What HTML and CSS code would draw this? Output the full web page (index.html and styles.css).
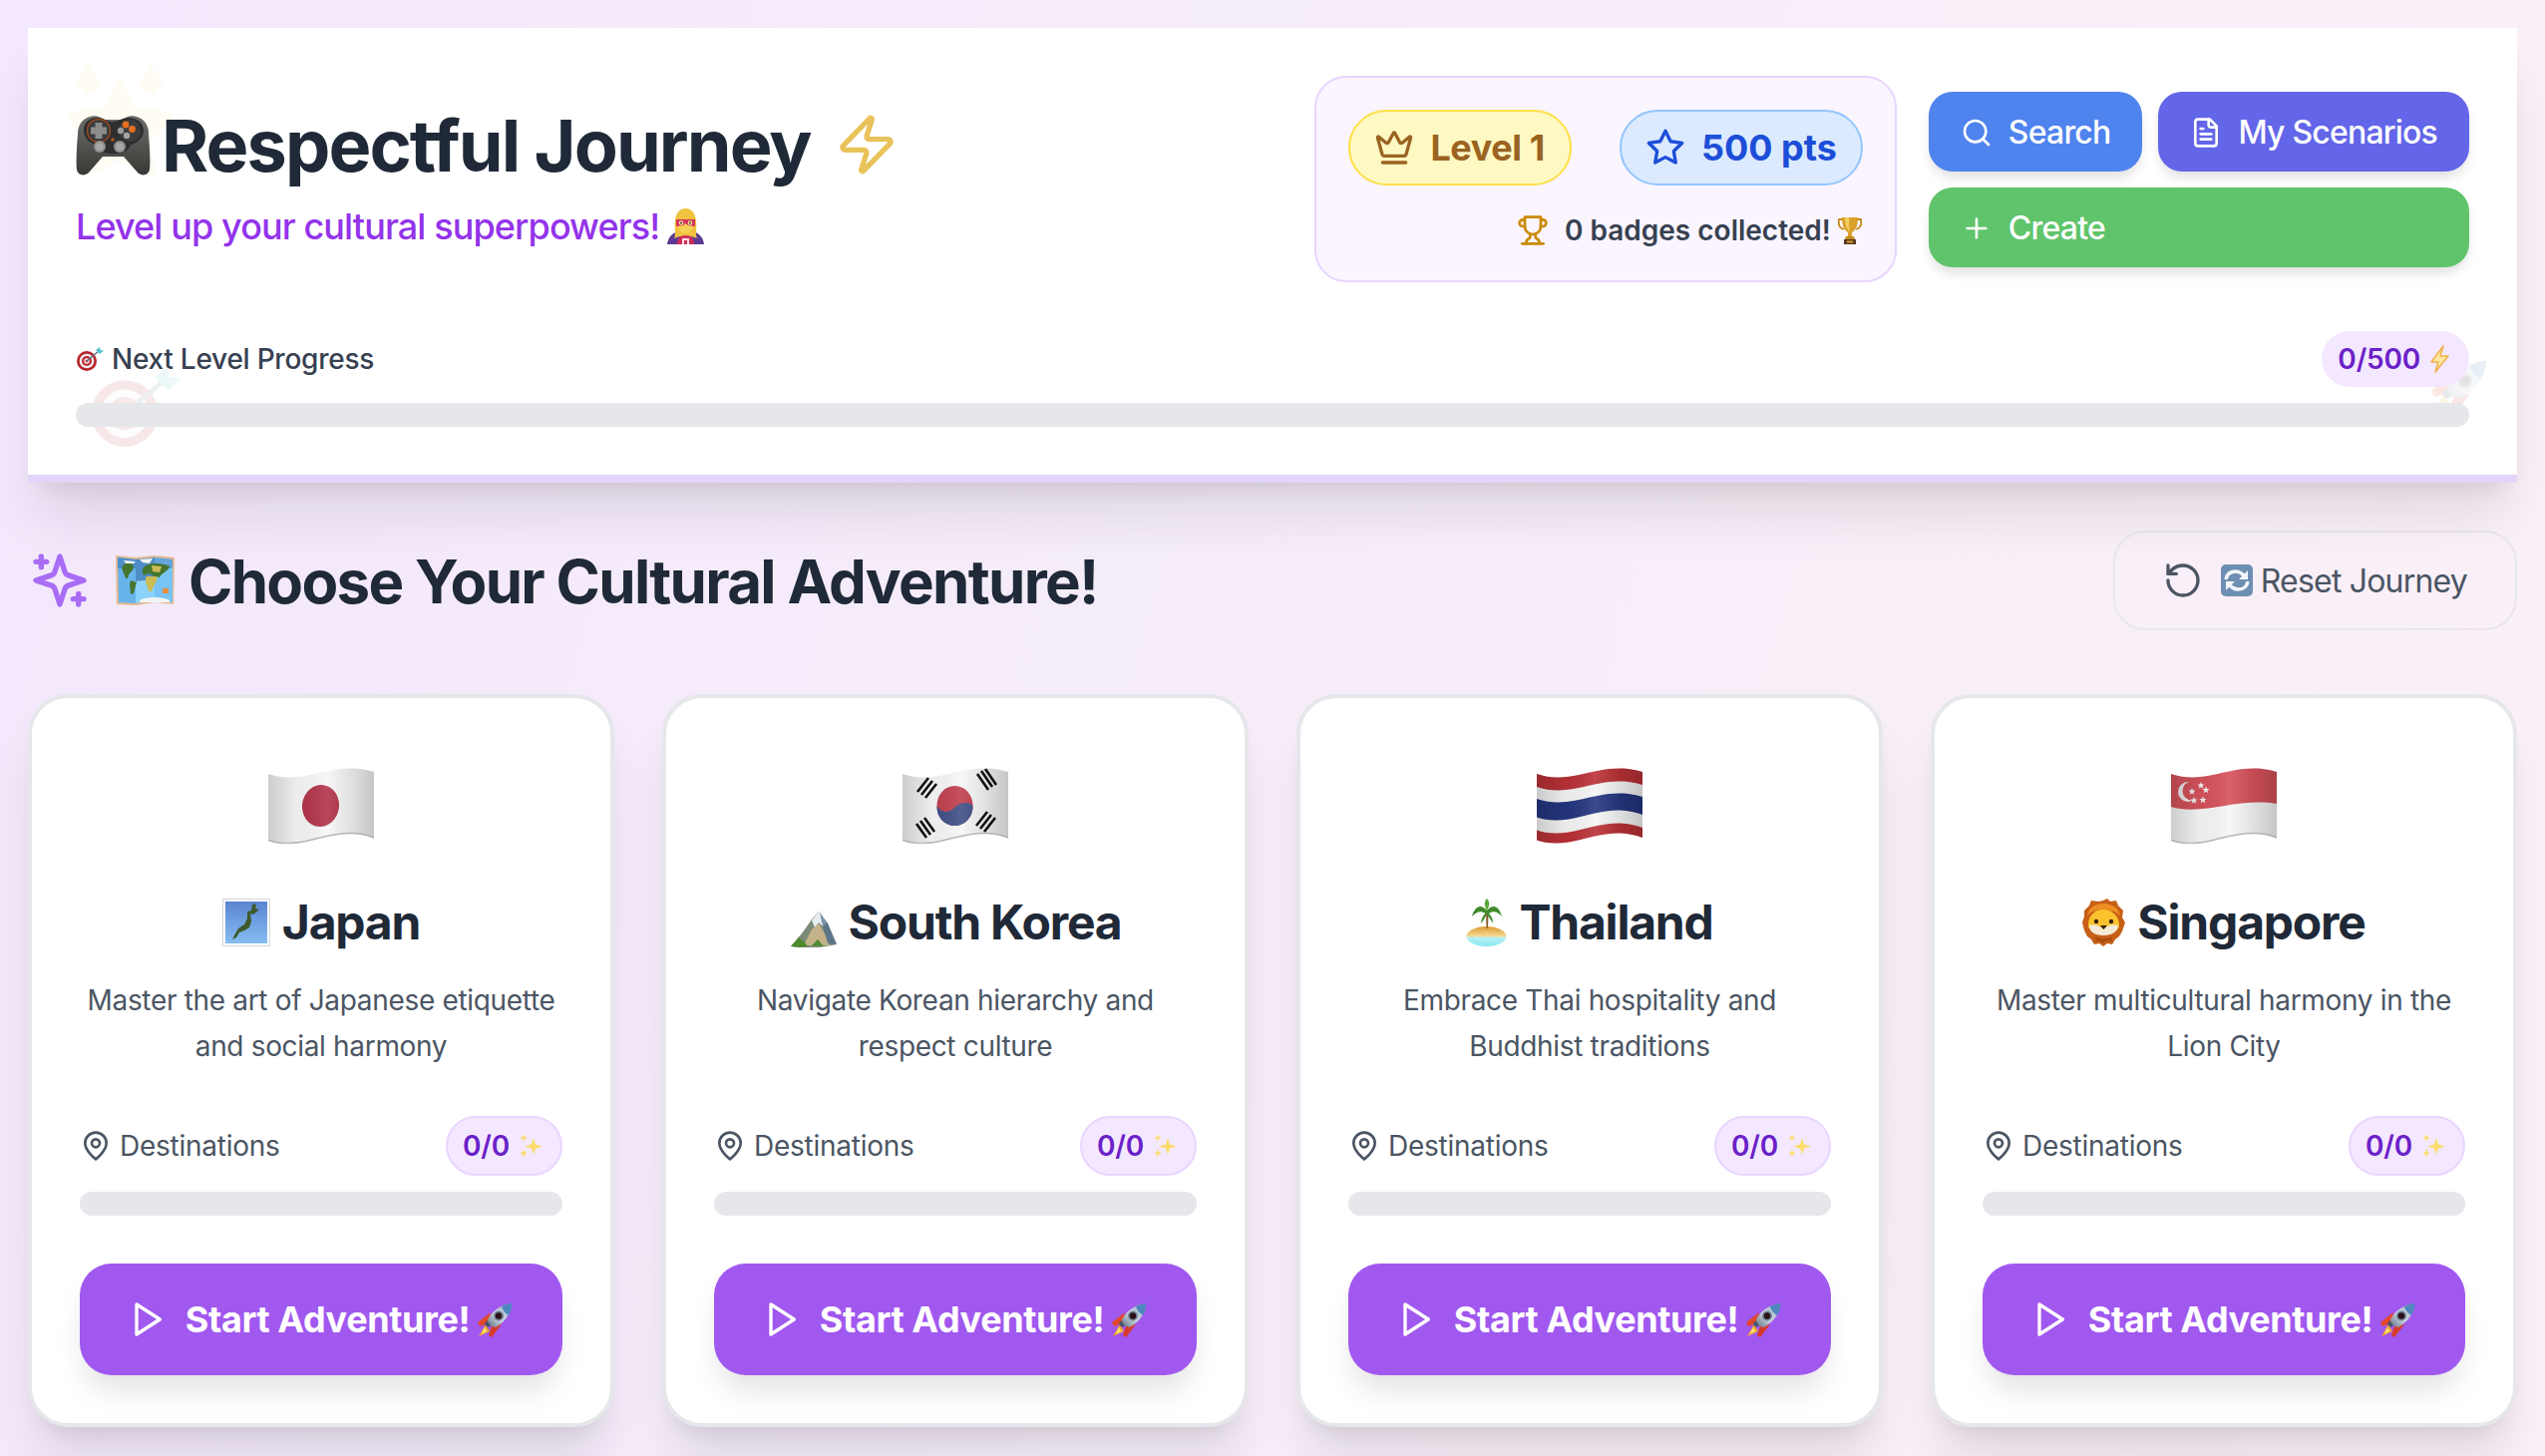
FILE: index.html
```html
<!DOCTYPE html>
<html lang="en">
<head>
<meta charset="utf-8">
<title>Respectful Journey</title>
<link rel="stylesheet" href="styles.css">
</head>
<body>
<svg class="sprite" aria-hidden="true">
  <defs>
    <linearGradient id="flagShade" x1="0" x2="1" y1="0" y2="0">
      <stop offset="0" stop-color="#000" stop-opacity=".17"/>
      <stop offset=".28" stop-color="#000" stop-opacity=".04"/>
      <stop offset=".55" stop-color="#fff" stop-opacity=".1"/>
      <stop offset=".8" stop-color="#000" stop-opacity=".1"/>
      <stop offset="1" stop-color="#000" stop-opacity=".2"/>
    </linearGradient>
    <linearGradient id="padBody" x1="0" x2="0" y1="0" y2="1">
      <stop offset="0" stop-color="#6d6e6a"/><stop offset="1" stop-color="#383936"/>
    </linearGradient>
    <linearGradient id="japSea" x1="0" x2="0" y1="0" y2="1">
      <stop offset="0" stop-color="#5a84d0"/><stop offset="1" stop-color="#86bdf3"/>
    </linearGradient>
    <linearGradient id="rocketBody" x1="0" x2="1" y1="1" y2="0">
      <stop offset="0" stop-color="#5f6f82"/><stop offset=".45" stop-color="#cfd8e2"/><stop offset="1" stop-color="#8ea5bc"/>
    </linearGradient>
    <linearGradient id="sandBall" x1="0" x2="0" y1="0" y2="1">
      <stop offset="0" stop-color="#dc9a2e"/><stop offset=".5" stop-color="#f5dc98"/><stop offset=".56" stop-color="#b5f0f4"/><stop offset="1" stop-color="#8ae6f2"/>
    </linearGradient>
    <clipPath id="flagClip"><path d="M0 6C14 11 28 10 42 7C58 3.5 74-1 92 1Q100 2 106 4V70Q96 66 84 65.5C66 65 50 71 32 74.5C20 76.5 8 75.5 0 72.5Z"/></clipPath>

    <symbol id="i-crown" viewBox="0 0 24 24"><path d="M11.562 3.266a.5.5 0 0 1 .876 0L15.39 8.87a1 1 0 0 0 1.516.294L21.183 5.5a.5.5 0 0 1 .798.519l-2.834 10.246a1 1 0 0 1-.956.734H5.81a1 1 0 0 1-.957-.734L2.02 6.02a.5.5 0 0 1 .798-.519l4.276 3.664a1 1 0 0 0 1.516-.294z"/><path d="M5 21h14"/></symbol>
    <symbol id="i-star" viewBox="0 0 24 24"><polygon points="12 2 15.09 8.26 22 9.27 17 14.14 18.18 21.02 12 17.77 5.82 21.02 7 14.14 2 9.27 8.91 8.26 12 2"/></symbol>
    <symbol id="i-search" viewBox="0 0 24 24"><circle cx="11" cy="11" r="8"/><path d="m21 21-4.3-4.3"/></symbol>
    <symbol id="i-file" viewBox="0 0 24 24"><path d="M15 2H6a2 2 0 0 0-2 2v16a2 2 0 0 0 2 2h12a2 2 0 0 0 2-2V7Z"/><path d="M14 2v4a2 2 0 0 0 2 2h4"/><path d="M10 9H8"/><path d="M16 13H8"/><path d="M16 17H8"/></symbol>
    <symbol id="i-plus" viewBox="0 0 24 24"><path d="M5 12h14"/><path d="M12 5v14"/></symbol>
    <symbol id="i-trophy" viewBox="0 0 24 24"><path d="M6 9H4.5a2.5 2.5 0 0 1 0-5H6"/><path d="M18 9h1.5a2.5 2.5 0 0 0 0-5H18"/><path d="M4 22h16"/><path d="M10 14.66V17c0 .55-.47.98-.97 1.21C7.85 18.75 7 20.24 7 22"/><path d="M14 14.66V17c0 .55.47.98.97 1.21C16.15 18.75 17 20.24 17 22"/><path d="M18 2H6v7a6 6 0 0 0 12 0V2Z"/></symbol>
    <symbol id="i-zap" viewBox="0 0 24 24"><path d="M4 14a1 1 0 0 1-.78-1.63l9.9-10.2a.5.5 0 0 1 .86.46l-1.92 6.02A1 1 0 0 0 13 10h7a1 1 0 0 1 .78 1.63l-9.9 10.2a.5.5 0 0 1-.86-.46l1.92-6.02A1 1 0 0 0 11 14z"/></symbol>
    <symbol id="i-sparkles" viewBox="0 0 24 24"><path d="m12 3-1.912 5.813a2 2 0 0 1-1.275 1.275L3 12l5.813 1.912a2 2 0 0 1 1.275 1.275L12 21l1.912-5.813a2 2 0 0 1 1.275-1.275L21 12l-5.813-1.912a2 2 0 0 1-1.275-1.275L12 3Z"/><path d="M5 3v4"/><path d="M19 17v4"/><path d="M3 5h4"/><path d="M17 19h4"/></symbol>
    <symbol id="i-reset" viewBox="0 0 24 24"><path d="M3 12a9 9 0 1 0 9-9 9.75 9.75 0 0 0-6.74 2.74L3 8"/><path d="M3 3v5h5"/></symbol>
    <symbol id="i-pin" viewBox="0 0 24 24"><path d="M20 10c0 6-8 12-8 12s-8-6-8-12a8 8 0 0 1 16 0Z"/><circle cx="12" cy="10" r="3"/></symbol>
    <symbol id="i-play" viewBox="0 0 24 24"><polygon points="6 3 20 12 6 21 6 3"/></symbol>

    <symbol id="e-pad" viewBox="0 0 75 60">
      <path fill="url(#padBody)" d="M14 1C20-1 26 2 28 4H47C49 2 55-1 61 1C69 3 73 10 73 18C74 32 75 46 74 54C73 60 66 61 62 57L48 41H27L13 57C9 61 2 60 1 54C0 46 1 32 2 18C2 10 6 3 14 1Z"/>
      <path fill="#2d2e30" d="M8 14C8 6 15 2 22 2C28 2 31 6 37 6C43 6 46 2 53 2C61 2 68 7 68 15C68 22 61 28 55 29C53 36 46 38 37 38C28 38 22 36 20 29C13 27 8 22 8 14Z"/>
      <circle cx="23" cy="15" r="11.5" fill="#3a3b3d" stroke="#9c4a1e" stroke-width="1.4"/>
      <path fill="#8b8d8d" d="M19.5 7H26.5V11.5H31V18.5H26.5V23H19.5V18.5H15V11.5H19.5Z"/>
      <circle cx="54" cy="15" r="11" fill="#3b3c3e"/>
      <circle cx="50" cy="9" r="3.4" fill="#e66f22"/><circle cx="56.5" cy="13.5" r="3.4" fill="#e66f22"/>
      <circle cx="45" cy="15" r="3.2" fill="#9a9b9b"/><circle cx="51" cy="20" r="3.2" fill="#a3a4a4"/>
      <circle cx="37" cy="24" r="1.8" fill="#b5551c"/>
      <circle cx="24" cy="31" r="6" fill="#8f9090"/><circle cx="24" cy="31" r="3.8" fill="#a7a8a8"/>
      <circle cx="44" cy="31" r="6" fill="#8f9090"/><circle cx="44" cy="31" r="3.8" fill="#a7a8a8"/>
    </symbol>

    <symbol id="e-hero" viewBox="0 0 37 36">
      <path fill="#5a3a92" d="M0 36C1 28 6 24 12 23H25C31 24 36 28 37 36Z"/>
      <path fill="#f0c23e" d="M7 30C9 26 7 20 8 12C9 4 13 0 18.500 0C24 0 28 4 29 12C30 20 28 26 30 30L24 28H13Z"/>
      <path fill="#f6cf55" d="M11 13C13 12 24 11 26 13C27 20 23 25 18.500 25C14 25 10 20 11 13Z"/>
      <path fill="#d6335f" d="M9 11H28V18L21 17L18.500 15L16 17L9 18Z"/>
      <circle cx="14" cy="14.500" r="2.200" fill="#f6e3a3"/><circle cx="23" cy="14.500" r="2.200" fill="#f6e3a3"/>
      <circle cx="14" cy="14.500" r="1" fill="#3a2a10"/><circle cx="23" cy="14.500" r="1" fill="#3a2a10"/>
      <path fill="#cf2c57" d="M10 36C10 30 13 27 18.500 27C24 27 27 30 27 36Z"/>
      <path fill="#f9dfe6" d="M15 30H22V36H15ZM17 32V36H20V32Z" fill-rule="evenodd"/>
    </symbol>

    <symbol id="e-dart" viewBox="0 0 28 24">
      <circle cx="11" cy="14" r="10" fill="#b6242b"/><circle cx="11" cy="14" r="7.300" fill="#f0f0f0"/>
      <circle cx="11" cy="14" r="5" fill="#c22a30"/><circle cx="11" cy="14" r="2.700" fill="#f0f0f0"/><circle cx="11" cy="14" r="1.300" fill="#b6242b"/>
      <path d="M11 14L23 4" stroke="#5d7280" stroke-width="1.400"/>
      <path fill="#58c1d2" d="M20 3L24 0L24.500 3L28 3.500L24 7Z"/>
    </symbol>

    <symbol id="e-star" viewBox="0 0 112 114">
      <path fill="#fcd34d" d="M56 16C59 16 61 20 63 28L70 43L98 47C110 49 112 53 105 60L85 78L91 104C93 113 88 114 81 110L56 96L31 110C24 114 19 113 21 104L27 78L7 60C0 53 2 49 14 47L42 43L49 28C51 20 53 16 56 16Z"/>
      <path fill="#fcd34d" d="M12 18L25 0L38 22L24 32ZM100 18L87 0L74 22L88 32Z"/>
    </symbol>

    <symbol id="e-map" viewBox="0 0 59 52">
      <path fill="#e3b98f" d="M0 1L20 3L39 1L59 3L58 50L39 48L20 51L1 50Z"/>
      <path fill="#67b3ec" d="M2 3L20 5V49L3 48Z"/><path fill="#4e8dc6" d="M20 5L39 3V25L20 27Z"/>
      <path fill="#79c4f6" d="M39 3L57 5V48L39 46Z"/><path fill="#8bd3fb" d="M20 27L39 25V46L20 49Z"/>
      <path fill="#4d90c9" d="M2 3L20 5V14L2 14Z"/><path fill="#62a5da" d="M39 3L57 5V14L39 14Z"/>
      <path fill="#46762e" d="M7 11C12 6 19 9 18 14C16 18 13 18 12 24L10 24C9 19 5 16 7 11ZM15 26L21 28L18 39L15 40C15 34 13 31 15 26ZM29 12C34 7 50 9 54 12C53 17 46 18 44 23L39 22L33 19L28 21C26 17 27 14 29 12Z"/>
      <path fill="#cdbb55" d="M31 22L41 22C43 26 38 30 36 37H33C32 31 28 27 31 22ZM36 11L46 12L44 18L37 17Z"/>
      <path fill="#e68f3d" d="M47 34H53V39H47Z"/>
      <path fill="#f2f5f5" d="M8 6L20 7L18 9L10 9ZM24 5L37 4L34 9L27 8ZM24 46C30 42 48 42 54 46L54 48H24Z"/>
    </symbol>

    <symbol id="e-japan" viewBox="0 0 48 48">
      <rect x=".5" y=".5" width="47" height="47" fill="#fff" stroke="#d3d7dc"/>
      <rect x="3" y="3" width="42" height="42" fill="url(#japSea)"/>
      <path fill="#3e5a2b" d="M30 6L34 5L33 10L37 11L31 16L28 15L29 23L27 29L22 32L17 34L14 39L10 41L13 35L16 30L22 26L25 20L25 13L29 12Z"/>
    </symbol>

    <symbol id="e-mount" viewBox="0 0 47 36">
      <path fill="#7c8b78" d="M1 35L12 22L22 8L29 0L38 12L47 33L30 36L10 36Z"/>
      <path fill="#c4b28a" d="M14 34L22 18L29 12L36 24L40 34Z"/>
      <path fill="#e9edf2" d="M22 9L29 0L37 11L33 15L29 11L25 16Z"/>
      <path fill="#4f6d8c" d="M30 1L38 12L47 33L38 32L33 15Z" opacity=".7"/>
      <path fill="#4e8a2e" d="M1 35L9 26L14 30L18 35L10 36ZM22 34L28 28L34 35Z"/>
    </symbol>

    <symbol id="e-island" viewBox="0 0 41 48">
      <ellipse cx="20.500" cy="38" rx="20" ry="10" fill="url(#sandBall)"/>
      <path fill="#8a5a2b" d="M20 14H22.500L22 30H20.500Z"/>
      <path fill="#3f8a2a" d="M21 12C15 5 9 7 6 18C11 13 15 12 19.500 15C17 17 15 21 15 25C18 21 20 18 21 15C22 18 25 21 27 25C27 20 25 17 23 15C27 12 32 13 36 18C33 7 27 5 21 12Z"/>
      <path fill="#5aa93a" d="M21 12C18 7 18 3 21 0C24 3 24 7 21 12Z"/>
    </symbol>

    <symbol id="e-lion" viewBox="0 0 43 48">
      <path fill="#c65f17" d="M21 2L25 0L28 3L34 2L36 7L41 12L40 19L43 24L40 33L37 38L33 41L30 46L25 45L21 48L17 45L12 46L9 41L5 38L2 32L0 24L2 18L2 12L7 7L9 2L16 3Z"/>
      <path fill="#ed8e22" d="M21 5C30 5 37 10 38 18C34 13 29 11 21 11C13 11 8 13 5 18C6 10 12 5 21 5Z"/>
      <path fill="#fbc32d" d="M21 11C31 11 37 19 37 26C37 33 30 35 21 35C12 35 6 33 6 26C6 19 11 11 21 11Z"/>
      <path fill="#f4ead7" d="M7 27C12 25 17 27 21 31C25 27 30 25 36 27C36 33 30 37 21 37C12 37 7 33 7 27Z"/>
      <circle cx="14" cy="23" r="2.200" fill="#33200f"/><circle cx="29" cy="23" r="2.200" fill="#33200f"/>
      <path fill="#33200f" d="M18 27H25L21.500 31Z"/>
      <path fill="#a84e12" d="M13 38C17 41 26 41 30 38L29 43L25 42L21 45L17 42L14 43Z"/>
    </symbol>

    <symbol id="e-rocket" viewBox="0 0 35 35">
      <path fill="#f0a02c" d="M8 22L1 34L12 29Z"/>
      <path fill="#fbe26a" d="M7 25L3.500 32L9.500 29Z"/>
      <path fill="#e2472c" d="M13 10L0 20L2 24L11 21Z"/>
      <path fill="#d83a2a" d="M24 22L14 35L11 33L14 24Z"/>
      <path fill="url(#rocketBody)" d="M34 1C35 9 28 19 18 25L11 23L10 17C15 8 24 2 34 1Z"/>
      <path fill="#4f86c0" d="M34 1C35 5 33 9 31 13C28 11 25 8 24 4C27 2.500 30 1.500 34 1Z"/>
      <circle cx="21" cy="13.500" r="5" fill="#6f8294"/><circle cx="21" cy="13.500" r="3.200" fill="#2b1119"/>
      <path fill="#46566a" d="M9 18L13 23L10 25L7 22Z"/>
    </symbol>

    <symbol id="e-trophy" viewBox="0 0 26 28">
      <path fill="none" stroke="#c48a1c" stroke-width="1.800" d="M6 3H2C1 9 3 12 7 13M20 3H24C25 9 23 12 19 13"/>
      <path fill="#d9a02a" d="M5 1H21C21 9 19 14 15 16V20H11V16C7 14 5 9 5 1Z"/>
      <path fill="#f3cf63" d="M8 1H12C12 7 12 12 13 16C10 13 8 8 8 1Z"/>
      <path fill="#c48a1c" d="M9 20H17L18 23H8Z"/>
      <path fill="#5b3a1f" d="M7 23H19V28H7Z"/>
      <path fill="#d9a02a" d="M10 24.500H16V26.500H10Z"/>
    </symbol>

    <symbol id="e-sync" viewBox="0 0 32 32">
      <rect width="32" height="32" rx="5" fill="#6c8eb2"/>
      <path d="M5 15C6 9 10 7 15 7C19 7 21 9 23 11" fill="none" stroke="#f2f6fa" stroke-width="3.500"/>
      <path fill="#f2f6fa" d="M27 6V15H18Z"/>
      <path d="M27 17C26 23 22 25 17 25C13 25 11 23 9 21" fill="none" stroke="#f2f6fa" stroke-width="3.500"/>
      <path fill="#f2f6fa" d="M5 26V17H14Z"/>
    </symbol>

    <symbol id="e-bolt" viewBox="0 0 19 28">
      <path fill="#fde9a0" stroke="#efb04a" stroke-width="1.500" stroke-linejoin="round" d="M13 1L1 17H8L5 27L18 11H10Z"/>
    </symbol>

    <symbol id="e-shine" viewBox="0 0 26 24">
      <path fill="#fcdc6a" d="M16 4L18 10.500L25 12.500L18 14.500L16 21L14 14.500L7 12.500L14 10.500ZM6 0L7 3L10 4L7 5L6 8L5 5L2 4L5 3ZM6 15L7 18L9.500 19.500L7 20.500L6 24L5 20.500L2.500 19.500L5 18Z"/>
    </symbol>

    <symbol id="f-japan" viewBox="0 0 106 76">
      <g clip-path="url(#flagClip)"><rect width="106" height="76" fill="#f7f7f7"/><ellipse cx="52.500" cy="38" rx="18.500" ry="21" fill="#b23349" transform="rotate(8 52.500 38)"/><rect width="106" height="76" fill="url(#flagShade)"/></g>
      <path d="M0 72.500C8 75.500 20 76.500 32 74.500C50 71 66 65 84 65.500Q96 66 106 70" fill="none" stroke="#9b9b9b" stroke-width="1.500" opacity=".7"/>
    </symbol>
    <symbol id="f-korea" viewBox="0 0 106 76">
      <g clip-path="url(#flagClip)"><rect width="106" height="76" fill="#f7f7f7"/>
        <ellipse cx="52.500" cy="38" rx="18" ry="20" fill="#c13f4f"/>
        <path fill="#3f4f87" d="M34.500 38C38 45 46 46 52 40C57 35 66 33 70.500 38C71 50 62 58 52.500 58C42 58 34 50 34.500 38Z"/>
        <g stroke="#111" stroke-width="2.600"><path d="M15 24L26 10M19 27L30 13M23 30L34 16"/><path d="M75 6L86 22M79 3L90 19M83 1L94 17"/><path d="M14 56L24 70M18 53L28 67M22 50L32 64"/><path d="M74 58L85 44M78 61L89 47M82 64L93 50"/></g>
        <rect width="106" height="76" fill="url(#flagShade)"/></g>
      <path d="M0 72.500C8 75.500 20 76.500 32 74.500C50 71 66 65 84 65.500Q96 66 106 70" fill="none" stroke="#9b9b9b" stroke-width="1.500" opacity=".7"/>
    </symbol>
    <symbol id="f-thai" viewBox="0 0 106 76">
      <g clip-path="url(#flagClip)"><rect width="106" height="76" fill="#b93136"/>
        <path d="M0 19C14 24 28 23 42 20C58 16.500 74 12 92 14Q100 15 106 17V60Q96 56 84 55.500C66 55 50 61 32 64.500C20 66.500 8 65.500 0 62.500Z" fill="#f5f5f5"/>
        <path d="M0 31C14 36 28 35 42 32C58 28.500 74 24 92 26Q100 27 106 29V47Q96 43 84 42.500C66 42 50 48 32 51.500C20 53.500 8 52.500 0 49.500Z" fill="#24367f"/>
        <rect width="106" height="76" fill="url(#flagShade)"/></g>
    </symbol>
    <symbol id="f-sing" viewBox="0 0 106 76">
      <g clip-path="url(#flagClip)"><rect width="106" height="76" fill="#f7f7f7"/>
        <path d="M0 0H106V36C90 33 70 35 54 38C36 41 16 44 0 39Z" fill="#d6525b"/>
        <circle cx="17" cy="24" r="10" fill="#efefef"/><circle cx="21" cy="23" r="9.500" fill="#d6525b"/>
        <path fill="#f4f4f4" d="M30 14l1 2.500 2.500 0-2 1.700.8 2.500-2.300-1.500-2.300 1.500.8-2.500-2-1.700 2.500 0zM21 20l1 2.500 2.500 0-2 1.700.8 2.500-2.300-1.500-2.300 1.500.8-2.500-2-1.700 2.500 0zM35 18.500l1 2.500 2.500 0-2 1.700.8 2.500-2.300-1.500-2.300 1.500.8-2.500-2-1.700 2.500 0zM23 29l1 2.500 2.500 0-2 1.700.8 2.500-2.300-1.500-2.300 1.500.8-2.500-2-1.700 2.500 0zM32 28.500l1 2.500 2.500 0-2 1.700.8 2.500-2.300-1.500-2.300 1.500.8-2.500-2-1.700 2.500 0z"/>
        <rect width="106" height="76" fill="url(#flagShade)"/></g>
      <path d="M0 72.500C8 75.500 20 76.500 32 74.500C50 71 66 65 84 65.500Q96 66 106 70" fill="none" stroke="#9b9b9b" stroke-width="1.500" opacity=".7"/>
    </symbol>
  </defs>
</svg>

<header class="top-card">
  <svg class="float float-star"><use href="#e-star"/></svg>
  <svg class="float float-dart"><use href="#e-dart"/></svg>
  <svg class="float float-rocket"><use href="#e-rocket"/></svg>
  <div class="top-row">
    <div class="brand">
      <h1 class="title"><svg class="emoji-pad"><use href="#e-pad"/></svg><span>Respectful Journey</span><svg class="zap line"><use href="#i-zap"/></svg></h1>
      <p class="tagline"><span>Level up your cultural superpowers!</span><svg class="emoji-hero"><use href="#e-hero"/></svg></p>
    </div>
    <div class="top-right">
      <div class="stats">
        <div class="pills">
          <div class="pill pill-level"><svg class="line ic-40"><use href="#i-crown"/></svg><span>Level 1</span></div>
          <div class="pill pill-points"><svg class="line ic-40"><use href="#i-star"/></svg><span>500 pts</span></div>
        </div>
        <div class="badges"><svg class="line ic-32 trophy-line"><use href="#i-trophy"/></svg><span>0 badges collected!</span><svg class="emoji-trophy"><use href="#e-trophy"/></svg></div>
      </div>
      <div class="actions">
        <button class="btn btn-blue"><svg class="line ic-32"><use href="#i-search"/></svg>Search</button>
        <button class="btn btn-indigo"><svg class="line ic-32"><use href="#i-file"/></svg>My Scenarios</button>
        <button class="btn btn-green"><svg class="line ic-32"><use href="#i-plus"/></svg>Create</button>
      </div>
    </div>
  </div>
  <div class="progress">
    <div class="progress-head">
      <div class="progress-label"><svg class="emoji-dart"><use href="#e-dart"/></svg><span>Next Level Progress</span></div>
      <div class="progress-count"><span>0/500</span><svg class="emoji-bolt"><use href="#e-bolt"/></svg></div>
    </div>
    <div class="bar"></div>
  </div>
</header>

<section class="section-head">
  <h2 class="section-title"><svg class="line sparkles"><use href="#i-sparkles"/></svg><svg class="emoji-map"><use href="#e-map"/></svg><span>Choose Your Cultural Adventure!</span></h2>
  <button class="reset"><svg class="line ic-40"><use href="#i-reset"/></svg><svg class="emoji-sync"><use href="#e-sync"/></svg><span>Reset Journey</span></button>
</section>

<main class="cards">
  <article class="card">
    <svg class="flag"><use href="#f-japan"/></svg>
    <h3 class="name"><svg class="emoji-name japan"><use href="#e-japan"/></svg><span>Japan</span></h3>
    <p class="desc">Master the art of Japanese etiquette and social harmony</p>
    <div class="dest"><div class="dest-label"><svg class="line ic-32"><use href="#i-pin"/></svg><span>Destinations</span></div><div class="count"><span>0/0</span><svg class="emoji-shine"><use href="#e-shine"/></svg></div></div>
    <div class="bar"></div>
    <button class="start"><svg class="line ic-40"><use href="#i-play"/></svg><span>Start Adventure!</span><svg class="emoji-rocket"><use href="#e-rocket"/></svg></button>
  </article>
  <article class="card">
    <svg class="flag"><use href="#f-korea"/></svg>
    <h3 class="name"><svg class="emoji-name mount"><use href="#e-mount"/></svg><span>South Korea</span></h3>
    <p class="desc">Navigate Korean hierarchy and respect culture</p>
    <div class="dest"><div class="dest-label"><svg class="line ic-32"><use href="#i-pin"/></svg><span>Destinations</span></div><div class="count"><span>0/0</span><svg class="emoji-shine"><use href="#e-shine"/></svg></div></div>
    <div class="bar"></div>
    <button class="start"><svg class="line ic-40"><use href="#i-play"/></svg><span>Start Adventure!</span><svg class="emoji-rocket"><use href="#e-rocket"/></svg></button>
  </article>
  <article class="card">
    <svg class="flag"><use href="#f-thai"/></svg>
    <h3 class="name"><svg class="emoji-name island"><use href="#e-island"/></svg><span>Thailand</span></h3>
    <p class="desc">Embrace Thai hospitality and Buddhist traditions</p>
    <div class="dest"><div class="dest-label"><svg class="line ic-32"><use href="#i-pin"/></svg><span>Destinations</span></div><div class="count"><span>0/0</span><svg class="emoji-shine"><use href="#e-shine"/></svg></div></div>
    <div class="bar"></div>
    <button class="start"><svg class="line ic-40"><use href="#i-play"/></svg><span>Start Adventure!</span><svg class="emoji-rocket"><use href="#e-rocket"/></svg></button>
  </article>
  <article class="card">
    <svg class="flag"><use href="#f-sing"/></svg>
    <h3 class="name"><svg class="emoji-name lion"><use href="#e-lion"/></svg><span>Singapore</span></h3>
    <p class="desc">Master multicultural harmony in the Lion City</p>
    <div class="dest"><div class="dest-label"><svg class="line ic-32"><use href="#i-pin"/></svg><span>Destinations</span></div><div class="count"><span>0/0</span><svg class="emoji-shine"><use href="#e-shine"/></svg></div></div>
    <div class="bar"></div>
    <button class="start"><svg class="line ic-40"><use href="#i-play"/></svg><span>Start Adventure!</span><svg class="emoji-rocket"><use href="#e-rocket"/></svg></button>
  </article>
</main>
</body>
</html>
```

FILE: styles.css
```css
* { box-sizing: border-box; }
html, body { margin: 0; height: 1460px; overflow: hidden; }
body {
  padding: 28px;
  font-family: Inter, "Liberation Sans", sans-serif;
  color: #1f2937;
  background: linear-gradient(105deg, #f3e8fc 0%, #f6edf9 50%, #fbf0f7 100%);
}
h1, h2, h3, p { margin: 0; }
button { font-family: inherit; border: 0; cursor: pointer; }
svg { flex: none; display: block; }
.sprite { position: absolute; width: 0; height: 0; }
.line { fill: none; stroke: currentColor; stroke-width: 2; stroke-linecap: round; stroke-linejoin: round; }
.ic-32 { width: 32px; height: 32px; }
.ic-40 { width: 40px; height: 40px; }

.top-card {
  position: relative;
  background: #fff;
  padding: 48px 48px 48px;
  border-bottom: 8px solid #e3d5f9;
  box-shadow: 0 40px 50px -10px rgba(0, 0, 0, .1), 0 16px 20px -12px rgba(0, 0, 0, .08);
}
.float { position: absolute; opacity: .06; }
.float-star { left: 36px; top: 36px; width: 112px; height: 114px; }
.float-dart { left: 60px; top: 340px; width: 94px; height: 80px; opacity: .1; }
.float-rocket { left: 2410px; top: 332px; width: 56px; height: 56px; opacity: .12; }

.top-row { position: relative; display: flex; justify-content: space-between; }
.brand { align-self: center; margin-top: -4px; }
.title { display: flex; align-items: center; font-size: 72px; line-height: 80px; font-weight: 700; letter-spacing: -1.9px; color: #1f2937; transform: translateY(-3px); }
.emoji-pad { width: 75px; height: 60px; margin-right: 11px; }
.zap { width: 64px; height: 64px; margin: -2px 0 0 24px; color: #e9c35a; }
.tagline { display: flex; align-items: center; margin-top: 18px; font-size: 36px; line-height: 40px; font-weight: 500; letter-spacing: -.9px; color: #9333ea; }
.emoji-hero { width: 37px; height: 36px; margin-left: 8px; }

.top-right { display: flex; align-items: center; gap: 32px; }
.stats { padding: 32px; background: #faf5ff; border: 2px solid #e9d5ff; border-radius: 32px; }
.pills { display: flex; gap: 48px; }
.pill { display: flex; align-items: center; gap: 16px; height: 76px; padding: 0 24px; border: 2px solid; border-radius: 38px; font-size: 36px; font-weight: 700; }
.pill-level { padding-right: 25px; background: #fef9c3; border-color: #fde047; color: #9a6322; letter-spacing: -.4px; }
.pill-points { background: #dbeafe; border-color: #93c5fd; color: #1d4ed8; }
.badges { display: flex; align-items: center; justify-content: flex-end; margin-top: 26px; height: 37px; font-size: 28px; font-weight: 600; color: #374151; }
.trophy-line { color: #ca8a04; margin-right: 16px; }
.emoji-trophy { width: 26px; height: 28px; margin-left: 6px; }

.actions { display: grid; grid-template-columns: auto auto; gap: 16px; }
.btn { display: flex; align-items: center; gap: 16px; height: 80px; padding: 2px 32px 0; border-radius: 24px; color: #fff; font-size: 32px; font-weight: 500; letter-spacing: -.8px; box-shadow: 0 8px 12px -2px rgba(0, 0, 0, .12); }
.btn-blue { background: #4f83ee; }
.btn-indigo { background: #6366e8; }
.btn-green { grid-column: span 2; background: #5fc46b; }

.progress { position: relative; margin-top: 49px; }
.progress-head { display: flex; justify-content: space-between; align-items: center; }
.progress-label { display: flex; align-items: center; font-size: 28px; font-weight: 500; letter-spacing: -.25px; color: #374151; }
.emoji-dart { width: 28px; height: 24px; margin-right: 8px; }
.progress-count { display: flex; align-items: center; height: 56px; padding: 0 20px 0 16px; background: #f3e8ff; border-radius: 28px; font-size: 28px; font-weight: 600; letter-spacing: -.2px; color: #6b21c8; }
.emoji-bolt { width: 19px; height: 28px; margin-left: 10px; }
.bar { height: 24px; margin-top: 16px; background: #e5e7eb; border-radius: 12px; }

.section-head { display: flex; justify-content: space-between; align-items: center; margin-top: 48px; }
.section-title { display: flex; align-items: center; font-size: 60px; line-height: 68px; font-weight: 700; letter-spacing: -1.7px; color: #1f2937; }
.sparkles { width: 64px; height: 64px; color: #a96cf5; }
.emoji-map { width: 59px; height: 52px; margin-left: 24px; margin-right: 14px; }
.section-title span { transform: translateY(1px); }
.reset { display: flex; align-items: center; height: 100px; padding: 0 48px; background: transparent; border: 2px solid #e7e6ee; border-radius: 32px; font-size: 32px; letter-spacing: -.8px; color: #4b5563; }
.emoji-sync { width: 32px; height: 32px; margin-left: 18px; margin-right: 8px; }

.cards { display: grid; grid-template-columns: repeat(4, 1fr); gap: 48px; margin-top: 64px; }
.card {
  display: flex; flex-direction: column;
  padding: 48px;
  background: #fff;
  border: 4px solid #e5e7eb;
  border-radius: 40px;
  box-shadow: 0 40px 50px -10px rgba(0, 0, 0, .1), 0 16px 20px -12px rgba(0, 0, 0, .08);
}
.flag { width: 106px; height: 76px; margin: 22px auto 0; }
.name { display: flex; align-items: center; justify-content: center; margin-top: 47px; font-size: 48px; line-height: 64px; font-weight: 700; letter-spacing: -1.2px; color: #1f2937; }
.emoji-name { height: 48px; margin-right: 12px; }
.japan { width: 48px; }
.mount { width: 47px; height: 36px; margin-top: 14px; }
.island { width: 41px; }
.lion { width: 43px; }
.desc { margin-top: 23px; font-size: 28px; line-height: 46px; letter-spacing: -.33px; text-align: center; color: #4b5563; }
.dest { display: flex; justify-content: space-between; align-items: center; margin-top: 47px; }
.dest-label { display: flex; align-items: center; gap: 8px; font-size: 28px; letter-spacing: -.25px; color: #4b5563; }
.count { display: flex; align-items: center; height: 60px; padding: 0 17px 0 15px; background: #f3e8ff; border: 2px solid #e9d5ff; border-radius: 30px; font-size: 28px; font-weight: 600; letter-spacing: -.2px; color: #6b21c8; }
.emoji-shine { width: 26px; height: 24px; margin-left: 8px; }
.start { display: flex; align-items: center; justify-content: center; height: 112px; margin-top: 48px; background: #a158ef; border-radius: 32px; color: #fff; font-size: 36px; font-weight: 700; letter-spacing: -.4px; box-shadow: 0 20px 30px -6px rgba(0, 0, 0, .12); }
.start .ic-40 { margin: 0 19px 0 -3px; }
.emoji-rocket { width: 35px; height: 35px; margin-left: 8px; }
```
